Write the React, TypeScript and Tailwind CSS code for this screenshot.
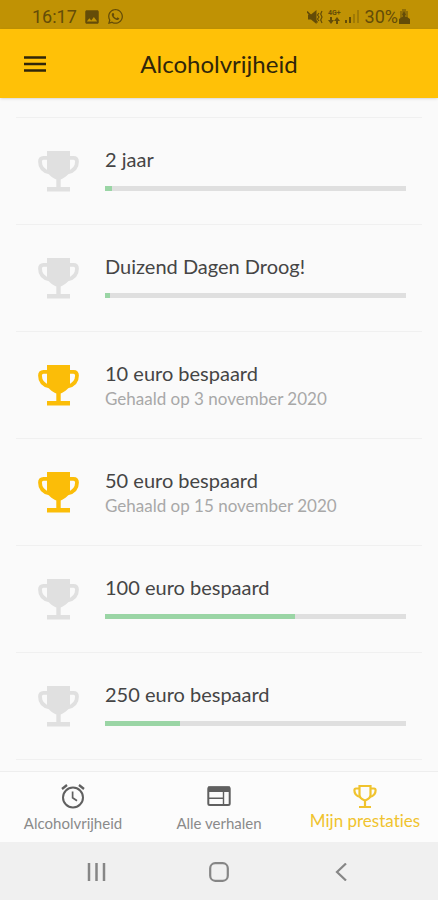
import React from "react";
import { MdImage } from "react-icons/md";
import { FaWhatsapp } from "react-icons/fa";

type Achievement = {
    title: string;
    reachedOn?: string;
    progress?: number;
};

const achievements: Achievement[] = [
    { title: "2 jaar", progress: 2.3 },
    { title: "Duizend Dagen Droog!", progress: 1.7 },
    { title: "10 euro bespaard", reachedOn: "3 november 2020" },
    { title: "50 euro bespaard", reachedOn: "15 november 2020" },
    { title: "100 euro bespaard", progress: 63 },
    { title: "250 euro bespaard", progress: 25 },
];

const TrophyIcon = ({ className }: { className: string }) => {
    return (
        <svg width="41" height="41" viewBox="0 0 41 41" fill="currentColor" className={className}>
            <path d="M9 0h23v19c0 4-5 7.500-9.300 9.500V36H32v4.500H9V36h9.300v-7.500C14 26.500 9 23 9 19z" />
            <path
                d="M10 6.800H5.500C3 6.800 2 8 2 10.500c0 6 3 9.500 9.500 11M31 6.800h4.500C38 6.800 39 8 39 10.500c0 6-3 9.500-9.500 11"
                fill="none"
                stroke="currentColor"
                strokeWidth="3.8"
            />
        </svg>
    );
};

const AlarmIcon = () => {
    return (
        <svg width="26" height="26" viewBox="0 0 26 26" fill="none" stroke="#606060">
            <circle cx="13" cy="14.5" r="10" strokeWidth="2" />
            <path d="M12.6 8.500v6.300l4.400 3" strokeWidth="1.7" />
            <path d="M2 6 7 2M24 6 19 2" strokeWidth="2.3" />
        </svg>
    );
};

const StoriesIcon = () => {
    return (
        <svg width="26" height="26" viewBox="0 0 26 26" fill="none" stroke="#606060">
            <rect x="2.3" y="4.3" width="21.4" height="17.7" rx="1.5" strokeWidth="2" />
            <path d="M2 3.500h22v5.500H2z" fill="#606060" stroke="none" />
            <path d="M17.5 9v13M3 15.300h14.500" strokeWidth="1.4" />
        </svg>
    );
};

const TrophyOutlineIcon = () => {
    return (
        <svg width="26" height="26" viewBox="0 0 26 26" fill="none" stroke="currentColor" strokeWidth="2.2">
            <path d="M7.500 3h11v9c0 2.500-2.500 4.500-5.500 5.500-3-1-5.500-3-5.500-5.500z" />
            <path d="M7.500 5.500H4c-1.200 0-1.600.6-1.600 1.800 0 3.500 2 6 6 6.700M18.500 5.500H22c1.200 0 1.600.6 1.600 1.800 0 3.500-2 6-6 6.700" />
            <path d="M13 17v6M7 24h12" />
        </svg>
    );
};

const StatusBar = () => {
    return (
        <div className="flex h-[29px] shrink-0 items-center justify-between bg-[#c09204] pl-8 pr-7 pt-1 font-[Roboto,sans-serif] text-[#644c08]">
            <div className="flex items-center gap-1.5">
                <span className="text-lg leading-6">16:17</span>
                <MdImage size={18} />
                <FaWhatsapp size={17} />
            </div>
            <div className="flex items-center gap-1">
                <svg width="17" height="14" viewBox="0 0 17 14" fill="currentColor">
                    <path d="M1 4.500h3L9.500 0v14L4 9.500H1z" />
                    <path d="M0 1.500 10.500 12.500" stroke="currentColor" strokeWidth="1.6" />
                    <path
                        d="M12 3l-1.500 2 1.500 2-1.500 2 1.500 2M15 1l-1.300 3L15 7l-1.300 3L15 13"
                        fill="none"
                        stroke="currentColor"
                        strokeWidth="1.2"
                    />
                </svg>
                <div className="flex flex-col items-center">
                    <span className="text-[7px] leading-[7px] font-bold">4G+</span>
                    <svg width="12" height="7" viewBox="0 0 12 7" fill="currentColor">
                        <path d="M2 0h2v3h2L3 7 0 3h2zM8 7h2V4h2L9 0 6 4h2z" />
                    </svg>
                </div>
                <svg width="14" height="13" viewBox="0 0 14 13" fill="currentColor">
                    <path d="M0 10h2v3H0zM4 7h2v6H4z" />
                    <path d="M8 4h2v9H8zM12 0h2v13h-2z" opacity="0.35" />
                </svg>
                <div className="flex items-center pl-0.5">
                    <span className="text-lg leading-6">30%</span>
                    <svg width="12" height="15" viewBox="0 0 12 15" fill="currentColor">
                        <path d="M4 0h4v2h2v7H2V2h2z" opacity="0.5" />
                        <path d="M6 2 8 6H7v2h2l3 2v5H1v-5l3-2h1V6H4z" />
                    </svg>
                </div>
            </div>
        </div>
    );
};

const Header = () => {
    return (
        <header className="grid h-[69px] shrink-0 grid-cols-[48px_1fr_48px] items-center bg-[#ffc107] px-3 shadow-sm">
            <button type="button" aria-label="Menu" className="flex h-12 items-center pl-3">
                <svg width="22" height="16" viewBox="0 0 22 16" fill="none" stroke="#30260a" strokeWidth="2.4">
                    <path d="M0 1.500h22M0 8h22M0 14.500h22" />
                </svg>
            </button>
            <h1 className="text-center text-2xl text-[#30260a]">Alcoholvrijheid</h1>
        </header>
    );
};

const AchievementRow = ({ title, reachedOn, progress }: Achievement) => {
    return (
        <li className="flex h-[107px] items-center border-b border-[#f0f0f0] pl-[22px] pr-4">
            <TrophyIcon className={reachedOn ? "shrink-0 text-[#fbbd08]" : "shrink-0 text-[#e0e0e0]"} />
            <div className="ml-[26px] h-[54px] min-w-0 flex-1">
                <p className="text-xl leading-[30px] text-[#454545]">{title}</p>
                {reachedOn ? (
                    <p className="text-[17px] leading-[22px] text-[#a8a8a8]">Gehaald op {reachedOn}</p>
                ) : (
                    <div
                        role="progressbar"
                        aria-label={title}
                        aria-valuenow={progress}
                        aria-valuemin={0}
                        aria-valuemax={100}
                        className="mt-3 h-[5px] bg-[#dfdfdf]"
                    >
                        <div className="h-full bg-[#9ad5a5]" style={{ width: `${progress}%` }}></div>
                    </div>
                )}
            </div>
        </li>
    );
};

const TabBar = () => {
    return (
        <nav className="grid h-[71px] shrink-0 grid-cols-3 border-t border-[#eeeeee] bg-[#fcfcfc] text-[#8a8a8a] [font-variant-ligatures:none]">
            <a href="#vrijheid" className="flex flex-col items-center gap-0.5 pt-[11px]">
                <AlarmIcon />
                <span className="text-[15px] leading-6">Alcoholvrijheid</span>
            </a>
            <a href="#verhalen" className="flex flex-col items-center gap-0.5 pt-[11px]">
                <StoriesIcon />
                <span className="text-[15px] leading-6">Alle verhalen</span>
            </a>
            <a href="#prestaties" aria-current="page" className="flex flex-col items-center pt-[11px] text-[#f0c32e]">
                <TrophyOutlineIcon />
                <span className="text-[17px] leading-6">Mijn prestaties</span>
            </a>
        </nav>
    );
};

const SystemNav = () => {
    return (
        <div className="flex h-[58px] shrink-0 items-center justify-between bg-[#f0f0f0] px-[79px] pt-0.5 text-[#868686]">
            <button type="button" aria-label="Recente apps" className="p-2">
                <svg width="19" height="18" viewBox="0 0 19 18" fill="none" stroke="currentColor" strokeWidth="2.5">
                    <path d="M2 0v18M9.500 0v18M17 0v18" />
                </svg>
            </button>
            <button type="button" aria-label="Startscherm" className="p-2">
                <svg width="20" height="20" viewBox="0 0 20 20" fill="none" stroke="currentColor" strokeWidth="2.2">
                    <rect x="1.2" y="1.2" width="17.6" height="17.6" rx="5" />
                </svg>
            </button>
            <button type="button" aria-label="Terug" className="p-2">
                <svg width="19" height="18" viewBox="0 0 19 18" fill="none" stroke="currentColor" strokeWidth="2.2">
                    <path d="M14 0.500 5 9 14 17.500" />
                </svg>
            </button>
        </div>
    );
};

const App = () => {
    return (
        <div className="flex h-screen flex-col bg-[#fafafa] font-[Lato,sans-serif]">
            <StatusBar />
            <Header />
            <main className="min-h-0 flex-1 overflow-hidden px-4 pt-[19px]">
                <ul className="border-t border-[#f0f0f0]">
                    {achievements.map((item) => (
                        <AchievementRow key={item.title} {...item} />
                    ))}
                </ul>
            </main>
            <TabBar />
            <SystemNav />
        </div>
    );
};

export default App;
